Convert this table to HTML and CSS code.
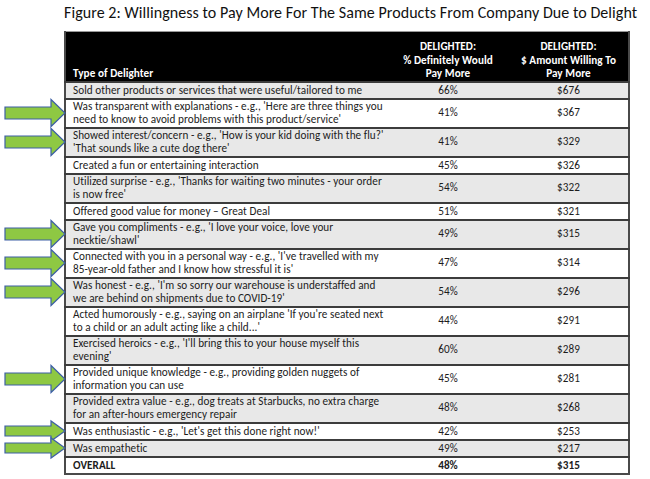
FILE: index.html
```html
<!DOCTYPE html>
<html lang="en">
<head>
<meta charset="utf-8">
<title>Figure 2</title>
<link rel="stylesheet" href="styles.css">
</head>
<body>
<main class="page">
  <h1 class="title">Figure 2: Willingness to Pay More For The Same Products From Company Due to Delight</h1>
  <table class="grid">
    <colgroup>
      <col class="c-type">
      <col class="c-pct">
      <col class="c-amt">
    </colgroup>
    <thead>
      <tr>
        <th class="h-type">Type of Delighter</th>
        <th>DELIGHTED:<br>% Definitely Would<br>Pay More</th>
        <th>DELIGHTED:<br>$ Amount Willing To<br>Pay More</th>
      </tr>
    </thead>
    <tbody>
      <tr class="alt"><td>Sold other products or services that were useful/tailored to me</td><td>66%</td><td>$676</td></tr>
      <tr class="two"><td class="mark"><svg class="arrow arrow-lg" viewBox="0 0 62 30"><polygon points="1,9 47,9 47,1.5 61,15 47,28.5 47,21 1,21"/></svg>Was transparent with explanations - e.g., 'Here are three things you<br>need to know to avoid problems with this product/service'</td><td>41%</td><td>$367</td></tr>
      <tr class="alt two"><td class="mark"><svg class="arrow arrow-lg" viewBox="0 0 62 30"><polygon points="1,9 47,9 47,1.5 61,15 47,28.5 47,21 1,21"/></svg>Showed interest/concern - e.g., 'How is your kid doing with the flu?'<br>'That sounds like a cute dog there'</td><td>41%</td><td>$329</td></tr>
      <tr><td>Created a fun or entertaining interaction</td><td>45%</td><td>$326</td></tr>
      <tr class="alt two"><td>Utilized surprise - e.g., 'Thanks for waiting two minutes - your order<br>is now free'</td><td>54%</td><td>$322</td></tr>
      <tr><td>Offered good value for money – Great Deal</td><td>51%</td><td>$321</td></tr>
      <tr class="alt two"><td class="mark"><svg class="arrow arrow-lg" viewBox="0 0 62 30"><polygon points="1,9 47,9 47,1.5 61,15 47,28.5 47,21 1,21"/></svg>Gave you compliments - e.g., 'I love your voice, love your<br>necktie/shawl'</td><td>49%</td><td>$315</td></tr>
      <tr class="two"><td class="mark"><svg class="arrow arrow-lg" viewBox="0 0 62 30"><polygon points="1,9 47,9 47,1.5 61,15 47,28.5 47,21 1,21"/></svg>Connected with you in a personal way - e.g., 'I've travelled with my<br>85-year-old father and I know how stressful it is'</td><td>47%</td><td>$314</td></tr>
      <tr class="alt two"><td class="mark"><svg class="arrow arrow-lg" viewBox="0 0 62 30"><polygon points="1,9 47,9 47,1.5 61,15 47,28.5 47,21 1,21"/></svg>Was honest - e.g., 'I'm so sorry our warehouse is understaffed and<br>we are behind on shipments due to COVID-19'</td><td>54%</td><td>$296</td></tr>
      <tr class="two"><td>Acted humorously - e.g., saying on an airplane 'If you're seated next<br>to a child or an adult acting like a child...'</td><td>44%</td><td>$291</td></tr>
      <tr class="alt two"><td>Exercised heroics - e.g., 'I'll bring this to your house myself this<br>evening'</td><td>60%</td><td>$289</td></tr>
      <tr class="two"><td class="mark"><svg class="arrow arrow-lg" viewBox="0 0 62 30"><polygon points="1,9 47,9 47,1.5 61,15 47,28.5 47,21 1,21"/></svg>Provided unique knowledge - e.g., providing golden nuggets of<br>information you can use</td><td>45%</td><td>$281</td></tr>
      <tr class="alt two"><td>Provided extra value - e.g., dog treats at Starbucks, no extra charge<br>for an after-hours emergency repair</td><td>48%</td><td>$268</td></tr>
      <tr><td class="mark"><svg class="arrow arrow-sm" viewBox="0 0 62 22"><polygon points="1,6 47,6 47,1 61,11 47,21 47,16 1,16"/></svg>Was enthusiastic - e.g., 'Let's get this done right now!'</td><td>42%</td><td>$253</td></tr>
      <tr class="alt"><td class="mark"><svg class="arrow arrow-sm" viewBox="0 0 62 22"><polygon points="1,6 47,6 47,1 61,11 47,21 47,16 1,16"/></svg>Was empathetic</td><td>49%</td><td>$217</td></tr>
      <tr class="total"><td>OVERALL</td><td>48%</td><td>$315</td></tr>
    </tbody>
  </table>
</main>
</body>
</html>
```

FILE: styles.css
```css
html, body {
  margin: 0;
  padding: 0;
  background: #ffffff;
}

.page {
  display: flex;
  flex-direction: column;
  align-items: flex-start;
  padding: 3px 0 0 64px;
  font-family: Carlito, Lato, "Open Sans", sans-serif;
  color: #1c1c1c;
}

.title {
  margin: 0;
  font-size: 16px;
  font-weight: 400;
  letter-spacing: 0.06px;
  line-height: 20px;
  color: #111;
  white-space: nowrap;
}

.grid {
  margin-top: 8px;
  width: 564px;
  border-collapse: collapse;
  table-layout: fixed;
  font-size: 11.2px;
  letter-spacing: 0.05px;
  border: 2px solid #4a4a4a;
  border-top: 1px solid #999;
}

.c-type { width: 322px; }
.c-pct { width: 122px; }
.c-amt { width: 120px; }

.grid th {
  background: #000;
  color: #fff;
  font-weight: 700;
  font-size: 11.2px;
  line-height: 13.5px;
  padding: 8px 4px 0;
  vertical-align: bottom;
  text-align: center;
  white-space: nowrap;
}

.grid th.h-type {
  text-align: left;
  padding-left: 7px;
}

.grid td {
  border-top: 2px solid #3c3c3c;
  padding: 1px 4px 0.5px;
  line-height: 13.5px;
  text-align: center;
  vertical-align: middle;
  white-space: nowrap;
}

.grid tr.two td {
  padding-top: 0;
  padding-bottom: 0;
}

.grid td:first-child {
  text-align: left;
  padding-left: 7px;
}

.grid tr.alt td {
  background: #e8e8e8;
}

.grid tr.total td {
  font-weight: 700;
}

.mark {
  position: relative;
}

.arrow {
  position: absolute;
  left: -62px;
  top: 50%;
  transform: translateY(-50%);
  width: 62px;
  overflow: visible;
}

.arrow-lg { height: 30px; }
.arrow-sm { height: 22px; }

.arrow polygon {
  fill: #8ec843;
  stroke: #3d5fa6;
  stroke-width: 1.2;
  stroke-linejoin: miter;
}
```
